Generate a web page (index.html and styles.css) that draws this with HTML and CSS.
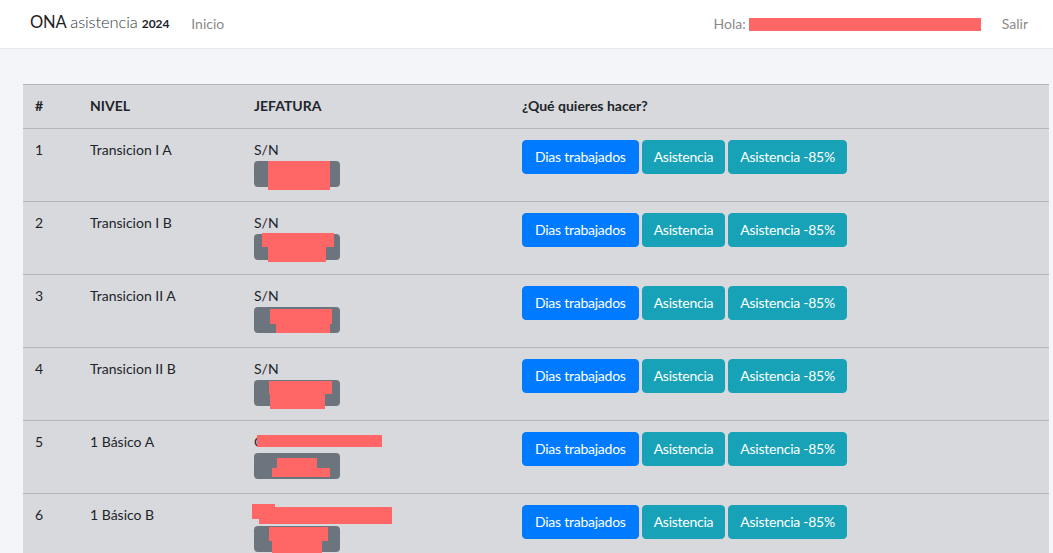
FILE: index.html
```html
<!DOCTYPE html>
<html lang="es">
<head>
<meta charset="utf-8">
<title>ONA asistencia 2024</title>
<link rel="stylesheet" href="styles.css">
</head>
<body>
<nav class="navbar">
  <div class="brand"><span class="brand-main">ONA</span> <span class="brand-light">asistencia</span> <span class="brand-year">2024</span></div>
  <a class="nav-link" href="#">Inicio</a>
  <div class="spacer"></div>
  <span class="hola">Hola: <span class="redact-name"></span></span>
  <a class="nav-link salir" href="#">Salir</a>
</nav>
<main class="content">
  <table class="tbl">
    <colgroup>
      <col class="c-num"><col class="c-nivel"><col class="c-jef"><col class="c-act">
    </colgroup>
    <thead>
      <tr><th>#</th><th>NIVEL</th><th>JEFATURA</th><th>¿Qué quieres hacer?</th></tr>
    </thead>
    <tbody>
      <tr>
        <td>1</td><td>Transicion I A</td>
        <td><div class="jef"><div class="jef-name">S/N</div><span class="badge"></span><i class="red r1a"></i></div></td>
        <td><div class="actions"><a class="btn btn-primary" href="#">Dias trabajados</a><a class="btn btn-info" href="#">Asistencia</a><a class="btn btn-info" href="#">Asistencia -85%</a></div></td>
      </tr>
      <tr>
        <td>2</td><td>Transicion I B</td>
        <td><div class="jef"><div class="jef-name">S/N</div><span class="badge"></span><i class="red r2a"></i><i class="red r2b"></i></div></td>
        <td><div class="actions"><a class="btn btn-primary" href="#">Dias trabajados</a><a class="btn btn-info" href="#">Asistencia</a><a class="btn btn-info" href="#">Asistencia -85%</a></div></td>
      </tr>
      <tr>
        <td>3</td><td>Transicion II A</td>
        <td><div class="jef"><div class="jef-name">S/N</div><span class="badge"></span><i class="red r3a"></i><i class="red r3b"></i></div></td>
        <td><div class="actions"><a class="btn btn-primary" href="#">Dias trabajados</a><a class="btn btn-info" href="#">Asistencia</a><a class="btn btn-info" href="#">Asistencia -85%</a></div></td>
      </tr>
      <tr>
        <td>4</td><td>Transicion II B</td>
        <td><div class="jef"><div class="jef-name">S/N</div><span class="badge"></span><i class="red r4a"></i><i class="red r4b"></i></div></td>
        <td><div class="actions"><a class="btn btn-primary" href="#">Dias trabajados</a><a class="btn btn-info" href="#">Asistencia</a><a class="btn btn-info" href="#">Asistencia -85%</a></div></td>
      </tr>
      <tr>
        <td>5</td><td>1 Básico A</td>
        <td><div class="jef"><div class="jef-name">C</div><span class="badge"></span><i class="red r5a"></i><i class="red r5b"></i><i class="red r5c"></i></div></td>
        <td><div class="actions"><a class="btn btn-primary" href="#">Dias trabajados</a><a class="btn btn-info" href="#">Asistencia</a><a class="btn btn-info" href="#">Asistencia -85%</a></div></td>
      </tr>
      <tr>
        <td>6</td><td>1 Básico B</td>
        <td><div class="jef"><div class="jef-name">&nbsp;</div><span class="badge"></span><i class="red r6a"></i><i class="red r6b"></i><i class="red r6c"></i><i class="red r6d"></i></div></td>
        <td><div class="actions"><a class="btn btn-primary" href="#">Dias trabajados</a><a class="btn btn-info" href="#">Asistencia</a><a class="btn btn-info" href="#">Asistencia -85%</a></div></td>
      </tr>
    </tbody>
  </table>
</main>
</body>
</html>
```

FILE: styles.css
```css
* { box-sizing: border-box; }
html, body { margin: 0; padding: 0; }
body {
  background: #f4f5f9;
  font-family: Lato, "Liberation Sans", sans-serif;
  font-size: 14px;
  line-height: 21px;
  color: #212529;
  overflow: hidden;
}
a { text-decoration: none; }

.navbar {
  height: 49px;
  background: #fff;
  border-bottom: 1px solid #e6e7ea;
  display: flex;
  align-items: center;
  padding: 0 25px 0 30px;
}
.brand {
  font-size: 16.5px;
  color: #212529;
  white-space: nowrap;
  margin-right: 22px;
  letter-spacing: -0.1px;
  margin-top: -2px;
}
.brand-main { font-weight: 400; color: #1d2124; }
.brand-light { font-weight: 300; color: #343a40; }
.brand-year { font-size: 12px; font-weight: 700; color: #212529; }
.nav-link { color: #8a8a8a; font-size: 14px; margin-top: -2px; }
.spacer { flex: 1; }
.hola { color: #8a8a8a; display: flex; align-items: center; margin-top: -2px; }
.redact-name {
  display: inline-block;
  width: 232px;
  height: 13px;
  background: #ff6666;
  margin-left: 3px;
  margin-top: 2px;
}
.salir { margin-left: 21px; }

.content { padding: 35px 0 0 23px; }
.tbl {
  width: 1026px;
  border-collapse: collapse;
  table-layout: fixed;
  background: #d8d9dd;
}
.c-num { width: 55px; }
.c-nivel { width: 164px; }
.c-jef { width: 268px; }
.c-act { width: 539px; }
.tbl th {
  text-align: left;
  font-weight: 700;
  padding: 10px 12px 12px;
  border-top: 1px solid #b5b6ba;
  border-bottom: 1px solid #b5b6ba;
  color: #212529;
}
.tbl td {
  vertical-align: top;
  padding: 10px 12px 14px;
  border-top: 1px solid #b5b6ba;
}
.tbl tbody tr:first-child td { border-top: 0; }

.jef { position: relative; height: 48px; }
.jef-name { height: 22px; line-height: 21px; }
.badge {
  display: block;
  width: 86px;
  height: 26px;
  background: #6c757d;
  border-radius: 4px;
}
.red { position: absolute; background: #ff6666; display: block; }
.r1a { left: 14px; top: 22px; width: 62px; height: 29px; }
.r2a { left: 8px; top: 21px; width: 72px; height: 14px; }
.r2b { left: 14px; top: 35px; width: 58px; height: 15px; }
.r3a { left: 16px; top: 24px; width: 62px; height: 15px; }
.r3b { left: 22px; top: 39px; width: 54px; height: 9px; }
.r4a { left: 15px; top: 23px; width: 63px; height: 13px; }
.r4b { left: 16px; top: 36px; width: 55px; height: 15px; }
.r5a { left: 3px; top: 4px; width: 125px; height: 12px; }
.r5b { left: 23px; top: 27px; width: 40px; height: 10px; }
.r5c { left: 18px; top: 37px; width: 58px; height: 9px; }
.r6a { left: -2px; top: 0; width: 23px; height: 15px; }
.r6b { left: 5px; top: 3px; width: 133px; height: 17px; }
.r6c { left: 15px; top: 23px; width: 59px; height: 14px; }
.r6d { left: 18px; top: 37px; width: 50px; height: 12px; }

.actions { display: flex; gap: 3px; margin-top: 1px; }
.btn {
  display: inline-block;
  padding: 6px 12px;
  line-height: 20px;
  font-size: 14px;
  letter-spacing: -0.25px;
  color: #fff;
  border: 1px solid transparent;
  border-radius: 4px;
  white-space: nowrap;
}
.btn-primary { background: #007bff; border-color: #007bff; }
.btn-info { background: #17a2b8; border-color: #17a2b8; padding: 6px 11px; }
```
